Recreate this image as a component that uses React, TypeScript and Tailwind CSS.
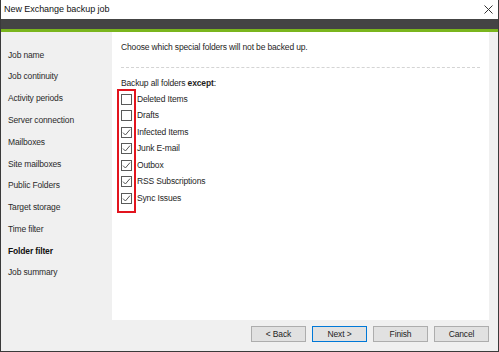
import React from "react";

const navItems = [
  "Job name",
  "Job continuity",
  "Activity periods",
  "Server connection",
  "Mailboxes",
  "Site mailboxes",
  "Public Folders",
  "Target storage",
  "Time filter",
  "Folder filter",
  "Job summary",
];

const folders: { name: string; checked: boolean }[] = [
  { name: "Deleted Items", checked: false },
  { name: "Drafts", checked: false },
  { name: "Infected Items", checked: true },
  { name: "Junk E-mail", checked: true },
  { name: "Outbox", checked: true },
  { name: "RSS Subscriptions", checked: true },
  { name: "Sync Issues", checked: true },
];

function Box({ checked }: { checked: boolean }) {
  return (
    <div className="w-[11px] h-[11px] border border-[#5a5a5a] bg-white flex items-center justify-center">
      {checked && (
        <svg width="9" height="9" viewBox="0 0 9 9">
          <path d="M1 4.6 L3.4 7 L8 1.6" fill="none" stroke="#555" strokeWidth="1" />
        </svg>
      )}
    </div>
  );
}

function Btn({ label, primary }: { label: string; primary?: boolean }) {
  return (
    <div
      className={
        primary
          ? "w-[55px] h-[16px] border border-[#0078d7] bg-[#e1e1e1] flex items-center justify-center"
          : "w-[55px] h-[16px] border border-[#adadad] bg-[#e1e1e1] flex items-center justify-center"
      }
    >
      {label}
    </div>
  );
}

export default function App() {
  return (
    <div
      className="w-[499px] h-[352px] flex flex-col bg-[#f0f0f0] border-l border-r border-b border-[#3a3a3a] text-[#1e1e1e] text-[8.5px] tracking-[-0.15px]"
      style={{ fontFamily: '"Liberation Sans", Arial, sans-serif' }}
    >
      <div className="h-[19px] bg-white flex items-center justify-between pl-[3px] pr-[5px]">
        <span className="text-[9px] tracking-[-0.05px] text-[#111]">New Exchange backup job</span>
        <svg width="9" height="9" viewBox="0 0 9 9">
          <path d="M0.5 0.5 L8.5 8.5 M8.5 0.5 L0.5 8.5" stroke="#333" strokeWidth="1" />
        </svg>
      </div>
      <div className="h-[10px] bg-[#444444]" />
      <div className="h-[3px] bg-[#7ab51d]" />
      <div className="flex-1 flex">
        <div className="w-[111px] flex flex-col pt-[12px] pl-[7px]">
          {navItems.map((n) => (
            <div
              key={n}
              className={
                n === "Folder filter"
                  ? "h-[21.8px] flex items-center font-bold text-[#111]"
                  : "h-[21.8px] flex items-center text-[#2a2a2a]"
              }
            >
              {n}
            </div>
          ))}
        </div>
        <div className="w-[377px] bg-white flex flex-col pl-[9px] pr-[9px] pt-[9px]">
          <div className="h-[12px] flex items-center">Choose which special folders will not be backed up.</div>
          <div className="mt-[14px] border-t border-dashed border-[#d4d4d4] w-[359px]" />
          <div className="mt-[9px] h-[12px] flex items-center">
            Backup all folders&nbsp;<span className="font-bold">except</span>:
          </div>
          <div className="relative mt-[2px] flex flex-col">
            <div className="absolute left-[-4px] top-[-2px] w-[19px] h-[124px] border-2 border-[#e2141e]" />
            {folders.map((f) => (
              <div key={f.name} className="h-[16.5px] flex items-center gap-[5px]">
                <Box checked={f.checked} />
                <span>{f.name}</span>
              </div>
            ))}
          </div>
        </div>
      </div>
      <div className="h-[31px] flex items-start justify-end gap-[6px] pt-[6px] pr-[9px]">
        <Btn label="< Back" />
        <Btn label="Next >" primary />
        <Btn label="Finish" />
        <Btn label="Cancel" />
      </div>
    </div>
  );
}
